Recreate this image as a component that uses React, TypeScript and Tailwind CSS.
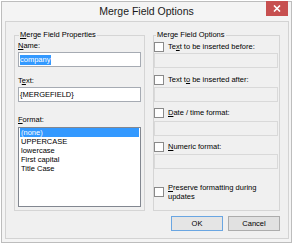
import React from "react";

// Windows-8 style "Merge Field Options" dialog

function Key({ c }: { c: string }) {
  return <span className="underline underline-offset-[1px]">{c}</span>;
}

function Box() {
  return <span className="block h-[10px] w-[10px] shrink-0 border border-[#8a8a8a] bg-white" />;
}

function DisabledInput({ className = "" }: { className?: string }) {
  return <div className={`h-[15px] w-[124px] border border-[#d9d9d9] bg-[#f0f0f0] ${className}`} />;
}

const FORMATS = ["UPPERCASE", "lowercase", "First capital", "Title Case"];

export default function App() {
  return (
    <div className="h-[244px] w-[293px] bg-white p-px font-['Liberation_Sans',Arial,sans-serif] text-[7.5px] text-black">
      <div className="relative flex h-[242px] w-[291px] flex-col border border-[#bdbdbd] bg-[#f4f4f4]">
        {/* title bar */}
        <div className="flex h-[19px] items-center justify-center text-[10.5px] text-[#1a1a1a]">
          Merge Field Options
        </div>
        <button
          type="button"
          className="absolute top-[-1px] right-[3px] flex h-[15px] w-[22px] items-center justify-center bg-[#c75050]"
        >
          <svg width="8" height="7" viewBox="0 0 8 7">
            <path d="M1 0.5 L7 6.5 M7 0.5 L1 6.5" stroke="white" strokeWidth="1.6" />
          </svg>
        </button>

        {/* client area */}
        <div className="ml-[3px] flex h-[218px] w-[284px] flex-col border border-[#d3d3d3] bg-[#f0f0f0]">
          <div className="mt-[8px] flex gap-[8px] px-[8px]">
            {/* Merge Field Properties */}
            <fieldset className="flex h-[181px] w-[130px] flex-col border border-[#d5d5d5] px-[3px] pb-[3px]">
              <legend className="ml-[1px] h-[10px] px-[1px] leading-[10px]">
                <Key c="M" />erge Field Properties
              </legend>
              <div className="mt-[1px] h-[10px] leading-[10px]">
                <Key c="N" />ame:
              </div>
              <div className="mt-[1px] flex h-[15px] w-[123px] items-center border border-[#a6abb3] bg-white pl-px">
                <span className="inline-block h-[10px] bg-[#3399ff] pr-px leading-[10px] text-white">company</span>
              </div>
              <div className="mt-[9px] h-[10px] leading-[10px]">
                T<Key c="e" />xt:
              </div>
              <div className="mt-[1px] flex h-[15px] w-[123px] items-center border border-[#a6abb3] bg-white pl-px">
                {"{MERGEFIELD}"}
              </div>
              <div className="mt-[13px] h-[10px] leading-[10px]">
                <Key c="F" />ormat:
              </div>
              <div className="mt-[2px] h-[80px] w-[123px] border border-[#828790] bg-white">
                <div className="mx-px h-[9px] bg-[#3399ff] pl-px leading-[9px] text-white">(none)</div>
                {FORMATS.map((f) => (
                  <div key={f} className="h-[9px] pl-[2px] leading-[9px]">
                    {f}
                  </div>
                ))}
              </div>
            </fieldset>

            {/* Merge Field Options */}
            <fieldset className="flex h-[181px] w-[128px] flex-col border border-[#d5d5d5] pb-[3px]">
              <legend className="ml-[2px] h-[10px] px-[1px] leading-[10px]">Merge Field Options</legend>
              <label className="mt-[2px] flex h-[10px] items-center gap-[4px]">
                <Box />
                <span>
                  Te<Key c="x" />t to be inserted before:
                </span>
              </label>
              <DisabledInput className="mt-[1px]" />
              <label className="mt-[7px] flex h-[10px] items-center gap-[4px]">
                <Box />
                <span>
                  Text t<Key c="o" /> be inserted after:
                </span>
              </label>
              <DisabledInput className="mt-[2px]" />
              <label className="mt-[6px] flex h-[10px] items-center gap-[4px]">
                <Box />
                <span>
                  <Key c="D" />ate / time format:
                </span>
              </label>
              <DisabledInput className="mt-[3px]" />
              <label className="mt-[6px] flex h-[10px] items-center gap-[4px]">
                <Box />
                <span>
                  <Key c="N" />umeric format:
                </span>
              </label>
              <DisabledInput className="mt-[2px]" />
              <label className="mt-[14px] flex items-center gap-[4px]">
                <Box />
                <span className="leading-[9px]">
                  <Key c="P" />reserve formatting during
                  <br />
                  updates
                </span>
              </label>
            </fieldset>
          </div>

          {/* buttons */}
          <div className="mt-[5px] flex justify-end gap-[5px] px-[8px]">
            <button
              type="button"
              className="h-[15px] w-[52px] border border-[#6aa6e2] bg-[#e5e5e5] text-[7.5px] leading-[13px]"
            >
              OK
            </button>
            <button
              type="button"
              className="h-[15px] w-[52px] border border-[#acacac] bg-[#e1e1e1] text-[7.5px] leading-[13px]"
            >
              Cancel
            </button>
          </div>
        </div>
      </div>
    </div>
  );
}
